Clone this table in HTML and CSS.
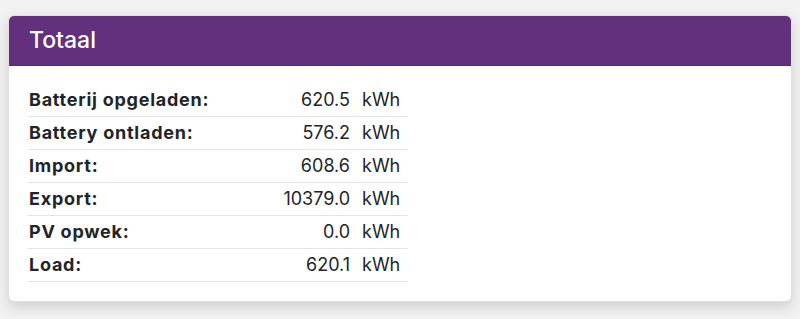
FILE: index.html
```html
<!DOCTYPE html>
<html lang="nl">

<head>
    <meta charset="UTF-8">
    <meta name="viewport" content="width=device-width, initial-scale=1.0">
    <title>Totaal</title>
    <link rel="stylesheet" href="styles.css">
</head>

<body>
    <div class="card">
        <div class="card-header">
            <h4 class="card-title">Totaal</h4>
        </div>
        <div class="card-body">
            <table class="totals">
                <tbody>
                    <tr>
                        <th>Batterij opgeladen:</th>
                        <td class="value">620.5</td>
                        <td class="unit">kWh</td>
                    </tr>
                    <tr>
                        <th>Battery ontladen:</th>
                        <td class="value">576.2</td>
                        <td class="unit">kWh</td>
                    </tr>
                    <tr>
                        <th>Import:</th>
                        <td class="value">608.6</td>
                        <td class="unit">kWh</td>
                    </tr>
                    <tr>
                        <th>Export:</th>
                        <td class="value">10379.0</td>
                        <td class="unit">kWh</td>
                    </tr>
                    <tr>
                        <th>PV opwek:</th>
                        <td class="value">0.0</td>
                        <td class="unit">kWh</td>
                    </tr>
                    <tr>
                        <th>Load:</th>
                        <td class="value">620.1</td>
                        <td class="unit">kWh</td>
                    </tr>
                </tbody>
            </table>
        </div>
    </div>
</body>

</html>
```

FILE: styles.css
```css
body {
    background-color: #f2f2f2;
    font-family: Inter, "Noto Sans", sans-serif;
    color: #212529;
    margin: 0;
    padding: 15px 8px;
}

.card {
    background-color: #fff;
    border: 1px solid rgba(0, 0, 0, 0.12);
    border-radius: 6px;
    box-shadow: 0 5px 14px rgba(0, 0, 0, 0.15);
    overflow: hidden;
}

.card-header {
    background-color: #62307d;
    border-bottom: 1px solid #57276f;
    color: #fff;
    padding: 10px 20px 10px 20px;
}

.card-title {
    margin: 0;
    font-size: 23px;
    font-weight: 500;
    line-height: 29px;
}

.card-body {
    padding: 18px 19px 19px 19px;
}

/* totals table */
.totals {
    width: 380px;
    border-collapse: collapse;
    font-size: 18px;
}

.totals th,
.totals td {
    padding: 4px;
    line-height: 24px;
    border-bottom: 1px solid #e3e5e8;
}

.totals th {
    text-align: left;
    font-weight: 700;
    letter-spacing: 0.75px;
    padding-left: 1px;
}

.totals .value {
    text-align: right;
}

.totals .unit {
    width: 42px;
    padding-left: 8px;
}
```
